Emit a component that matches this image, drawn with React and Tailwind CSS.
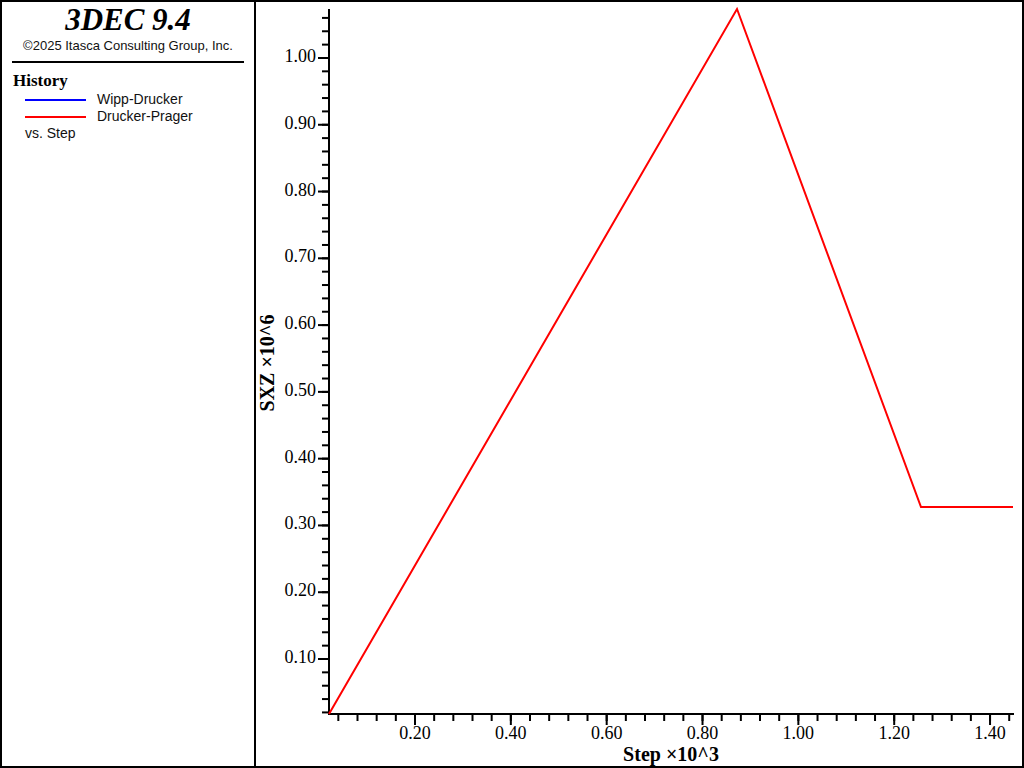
import React from "react";

const yTicks = [0.1, 0.2, 0.3, 0.4, 0.5, 0.6, 0.7, 0.8, 0.9, 1.0];
const xTicks = [0.2, 0.4, 0.6, 0.8, 1.0, 1.2, 1.4];
const yPos = (v) => 657 - (v - 0.1) * 667.8;
const xPos = (v) => 415 + (v - 0.2) * 479.2;

const Chart = () => {
  const minorY = [];
  for (let v = 0.02; v < 1.07; v += 0.02) minorY.push(yPos(v));
  const minorX = [];
  for (let v = 0.04; v < 1.5; v += 0.04) minorX.push(xPos(v));
  // svg origin sits at page x=256
  return (
    <svg width="766" height="764" viewBox="256 0 766 764" className="block">
      <line x1="329" y1="7" x2="329" y2="713" stroke="black" strokeWidth="2" />
      <line x1="328" y1="712" x2="1014" y2="712" stroke="black" strokeWidth="2" />
      {minorY.map((y, i) => (
        <line key={i} x1="322" y1={y} x2="329" y2={y} stroke="black" strokeWidth="2" />
      ))}
      {yTicks.map((v) => (
        <g key={v}>
          <line x1="318" y1={yPos(v)} x2="329" y2={yPos(v)} stroke="black" strokeWidth="2" />
          <text x="316" y={yPos(v) + 4} textAnchor="end" fontFamily="Liberation Serif, serif" fontSize="18">
            {v.toFixed(2)}
          </text>
        </g>
      ))}
      {minorX.map((x, i) => (
        <line key={i} x1={x} y1="712" x2={x} y2="719" stroke="black" strokeWidth="2" />
      ))}
      {xTicks.map((v) => (
        <g key={v}>
          <line x1={xPos(v)} y1="712" x2={xPos(v)} y2="723" stroke="black" strokeWidth="2" />
          <text x={xPos(v)} y="737" textAnchor="middle" fontFamily="Liberation Serif, serif" fontSize="18">
            {v.toFixed(2)}
          </text>
        </g>
      ))}
      <polyline points="329,712 737,7 921,505 1013,505" fill="none" stroke="#ff0000" strokeWidth="2" />
      <text x="671" y="759" textAnchor="middle" fontFamily="Liberation Serif, serif" fontSize="20" fontWeight="bold">
        Step ×10^3
      </text>
      <text
        transform="translate(274 361) rotate(-90)"
        textAnchor="middle"
        fontFamily="Liberation Serif, serif"
        fontSize="20"
        fontWeight="bold"
      >
        SXZ ×10^6
      </text>
    </svg>
  );
};

export default function App() {
  return (
    <div className="w-[1024px] h-[768px] border-2 border-black bg-white flex overflow-hidden">
      <div className="w-[254px] shrink-0 border-r-2 border-black px-[10px]">
        <div className="text-center font-[family-name:Liberation_Serif,serif] italic font-bold text-[31px] leading-[34px] mt-[1px]">
          3DEC 9.4
        </div>
        <div className="text-center font-[family-name:Liberation_Sans,sans-serif] text-[13px] leading-[18px] text-[#111]">
          ©2025 Itasca Consulting Group, Inc.
        </div>
        <div className="border-t-2 border-black mt-[6px]" />
        <div className="font-[family-name:Liberation_Serif,serif] font-bold text-[17px] leading-[20px] mt-[8px] pl-[1px]">
          History
        </div>
        <div className="font-[family-name:Liberation_Sans,sans-serif] text-[14px] leading-[17px] text-[#111]">
          <div className="flex items-center">
            <span className="w-[61px] h-[2px] bg-[#0000ff] ml-[13px] mr-[11px]" />
            Wipp-Drucker
          </div>
          <div className="flex items-center">
            <span className="w-[61px] h-[2px] bg-[#ff0000] ml-[13px] mr-[11px]" />
            Drucker-Prager
          </div>
          <div className="pl-[13px]">vs. Step</div>
        </div>
      </div>
      <Chart />
    </div>
  );
}
